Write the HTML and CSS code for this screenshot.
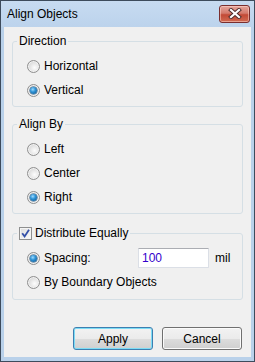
FILE: index.html
```html
<!DOCTYPE html>
<html lang="en">
<head>
  <meta charset="UTF-8">
  <title>Align Objects</title>
  <link rel="stylesheet" href="styles.css">
</head>
<body>
  <div class="window">
    <div class="titlebar">
      <span class="title">Align Objects</span>
      <button class="close-btn" aria-label="Close">
        <svg width="14" height="11" viewBox="0 0 14 11">
          <path d="M3 2 L11 9 M11 2 L3 9" stroke="#4b2a2a" stroke-width="4" stroke-linecap="square"/>
          <path d="M3 2 L11 9 M11 2 L3 9" stroke="#ffffff" stroke-width="2.2" stroke-linecap="square"/>
        </svg>
      </button>
    </div>

    <div class="client">
      <fieldset class="group group-direction">
        <legend>Direction</legend>
        <label class="option"><span class="radio"></span>Horizontal</label>
        <label class="option"><span class="radio checked"></span>Vertical</label>
      </fieldset>

      <fieldset class="group group-align">
        <legend>Align By</legend>
        <label class="option"><span class="radio"></span>Left</label>
        <label class="option"><span class="radio"></span>Center</label>
        <label class="option"><span class="radio checked"></span>Right</label>
      </fieldset>

      <fieldset class="group group-distribute">
        <legend class="check-legend">
          <span class="checkbox">
            <svg width="9" height="9" viewBox="0 0 9 9">
              <path d="M1.2 4.2 L3.6 7.4 L8 0.8" fill="none" stroke="#3450a8" stroke-width="1.8"/>
            </svg>
          </span>Distribute Equally
        </legend>
        <div class="option">
          <span class="radio checked"></span>
          <span class="spacing-label">Spacing:</span>
          <input class="textbox" type="text" value="100">
          <span class="unit">mil</span>
        </div>
        <label class="option"><span class="radio"></span>By Boundary Objects</label>
      </fieldset>

      <div class="actions">
        <button class="btn btn-default">Apply</button>
        <button class="btn">Cancel</button>
      </div>
    </div>
  </div>
</body>
</html>
```

FILE: styles.css
```css
body {
  margin: 0;
  font-family: 'Liberation Sans', Arial, sans-serif;
  font-size: 12px;
  color: #000;
}
.window {
  box-sizing: border-box;
  width: 255px;
  height: 362px;
  border: 1px solid #3d4b5c;
  background: #b9d1ea;
  display: flex;
  flex-direction: column;
}
.titlebar {
  height: 26px;
  flex: none;
  display: flex;
  align-items: center;
  justify-content: space-between;
  padding: 0 4px 0 6px;
  background: linear-gradient(#c7dbf1 0%, #bcd3ec 100%);
}
.title {
  line-height: 15px;
}
.close-btn {
  width: 31px;
  height: 18px;
  margin-top: -1px;
  padding: 0;
  border: 1px solid #7a2e2e;
  border-radius: 3px;
  background: linear-gradient(#e6a59c 0%, #d47a6c 45%, #c24a36 55%, #d16a52 100%);
  box-shadow: inset 0 0 0 1px rgba(255, 220, 210, 0.5);
  display: flex;
  align-items: center;
  justify-content: center;
}
.client {
  flex: 1;
  margin: 0 3px 4px;
  background: #f0f0f0;
  padding: 7px 8px 0;
}
.group {
  margin: 0;
  padding: 5px 0 4px;
  border: 1px solid #d5dfe5;
  border-radius: 3px;
  min-width: 0;
}
.group legend {
  margin-left: 4px;
  padding: 0 2px;
  line-height: 15px;
}
.group-align {
  margin-top: 10px;
}
.group-distribute {
  margin-top: 12px;
  padding-bottom: 5px;
}
.check-legend {
  display: flex;
  align-items: center;
}
.checkbox {
  box-sizing: border-box;
  width: 13px;
  height: 13px;
  margin-right: 3px;
  border: 1px solid #8e8f8f;
  background: linear-gradient(135deg, #dcdcdc 0%, #fbfbfb 100%);
  box-shadow: inset 0 0 0 1px #f4f4f4;
  display: flex;
  align-items: center;
  justify-content: center;
}
.option {
  height: 24px;
  display: flex;
  align-items: center;
  padding-left: 14px;
}
.radio {
  box-sizing: border-box;
  position: relative;
  width: 13px;
  height: 13px;
  margin-right: 4px;
  border: 1px solid #8f8f8f;
  border-radius: 50%;
  background: radial-gradient(circle at 60% 60%, #fdfdfd 0%, #e6e6e6 45%, #c9c9c9 100%);
  box-shadow: inset 0 0 0 1px #f2f2f2;
}
.radio.checked::after {
  content: "";
  position: absolute;
  left: 2px;
  top: 2px;
  width: 7px;
  height: 7px;
  border-radius: 50%;
  background: radial-gradient(circle at 40% 35%, #9fdcff 0%, #2f93d6 40%, #0a4e86 100%);
  box-shadow: 0 0 0 0.5px #25537a;
}
.spacing-label {
  width: 94px;
}
.textbox {
  box-sizing: border-box;
  width: 71px;
  height: 20px;
  margin: 0;
  padding: 0 3px;
  border: 1px solid #dbdfe6;
  border-top-color: #abadb3;
  border-radius: 1px;
  background: #fff;
  font: inherit;
  color: #3300cc;
}
.unit {
  margin-left: 6px;
}
.actions {
  display: flex;
  justify-content: flex-end;
  gap: 9px;
  margin-top: 27px;
  padding-right: 1px;
}
.btn {
  box-sizing: border-box;
  width: 80px;
  height: 23px;
  padding: 0;
  border: 1px solid #707070;
  border-radius: 3px;
  background: linear-gradient(#f2f2f2 0%, #ebebeb 50%, #dddddd 51%, #cfcfcf 100%);
  box-shadow: inset 0 0 0 1px #fbfbfb;
  font: inherit;
  color: #000;
}
.btn-default {
  border-color: #3c7fb1;
  box-shadow: inset 0 0 0 1px #7ddcf5;
}
```
